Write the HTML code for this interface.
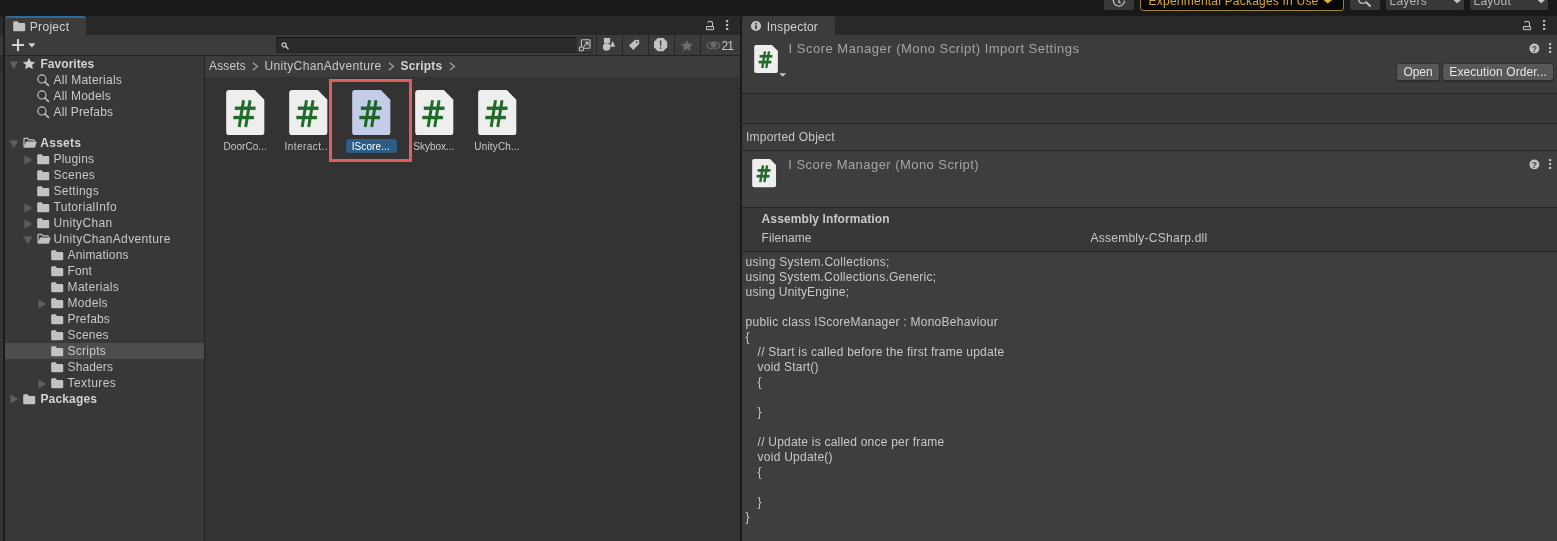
<!DOCTYPE html>
<html lang="en">
<head>
<meta charset="utf-8">
<title>Unity - Project / Inspector</title>
<style>
html,body{margin:0;padding:0;background:#383838;}
body{width:1557px;height:541px;position:relative;overflow:hidden;font-family:"Liberation Sans", sans-serif;}
#app{position:absolute;left:0;top:0;width:1557px;height:541px;will-change:transform;}
.t{position:absolute;white-space:pre;}
svg{display:block;overflow:visible;}
</style>
</head>
<body>
<div id="app">
<div style="position:absolute;left:0px;top:0px;width:1557px;height:16px;background:#191919;"></div>
<div style="position:absolute;left:0px;top:16px;width:1557px;height:19px;background:#282828;"></div>
<div style="position:absolute;left:0px;top:16px;width:3px;height:19px;background:#2a2a2a;"></div>
<div style="position:absolute;left:0px;top:35px;width:3px;height:18px;background:#393939;"></div>
<div style="position:absolute;left:0px;top:53px;width:3px;height:1px;background:#444444;"></div>
<div style="position:absolute;left:0px;top:54px;width:3px;height:16px;background:#2e2e2e;"></div>
<div style="position:absolute;left:0px;top:70px;width:3px;height:471px;background:#353535;"></div>
<div style="position:absolute;left:3px;top:16px;width:2px;height:525px;background:#1b1b1b;"></div>
<div style="position:absolute;left:5px;top:35px;width:735px;height:20px;background:#3c3c3c;"></div>
<div style="position:absolute;left:5px;top:55px;width:735px;height:1px;background:#232323;"></div>
<div style="position:absolute;left:5px;top:56px;width:199px;height:485px;background:#383838;"></div>
<div style="position:absolute;left:204px;top:56px;width:1px;height:485px;background:#232323;"></div>
<div style="position:absolute;left:205px;top:56px;width:535px;height:21px;background:#3c3c3c;"></div>
<div style="position:absolute;left:205px;top:77px;width:535px;height:464px;background:#333333;"></div>
<div style="position:absolute;left:740px;top:16px;width:2px;height:525px;background:#1b1b1b;"></div>
<div style="position:absolute;left:742px;top:35px;width:815px;height:58px;background:#3c3c3c;"></div>
<div style="position:absolute;left:742px;top:93px;width:815px;height:1px;background:#232323;"></div>
<div style="position:absolute;left:742px;top:94px;width:815px;height:29px;background:#383838;"></div>
<div style="position:absolute;left:742px;top:123px;width:815px;height:1px;background:#232323;"></div>
<div style="position:absolute;left:742px;top:124px;width:815px;height:26px;background:#3c3c3c;"></div>
<div style="position:absolute;left:742px;top:150px;width:815px;height:1px;background:#232323;"></div>
<div style="position:absolute;left:742px;top:151px;width:815px;height:56px;background:#3e3e3e;"></div>
<div style="position:absolute;left:742px;top:207px;width:815px;height:1px;background:#232323;"></div>
<div style="position:absolute;left:742px;top:208px;width:815px;height:43px;background:#383838;"></div>
<div style="position:absolute;left:742px;top:251px;width:815px;height:1px;background:#232323;"></div>
<div style="position:absolute;left:742px;top:252px;width:815px;height:289px;background:#3e3e3e;"></div>
<div style="position:absolute;left:1104px;top:0px;width:30px;height:10px;background:#383838;border-radius:0 0 2px 2px;"></div>
<svg style="position:absolute;left:1112px;top:0px;" width="14" height="8" viewBox="0 0 14 8"><path d="M1.3 0 A5.6 5.6 0 0 0 12.5 0.8" fill="none" stroke="#c4c4c4" stroke-width="1.25"/><path d="M6.9 0 V2.2 L8.6 2.9" fill="none" stroke="#c4c4c4" stroke-width="1.3"/></svg>
<div style="position:absolute;left:1140px;top:-6px;width:202px;height:15px;background:#060606;border:1px solid #9a822c;border-radius:3px;"></div>
<span class="t" style="left:1148.60px;top:-6.86px;font-size:12px;line-height:16px;color:#d9ab2c;letter-spacing:0.207px;">Experimental Packages In Use</span>
<svg style="position:absolute;left:1323px;top:0px;" width="10" height="4" viewBox="0 0 10 4"><path d="M0.5 0 H9 L4.8 3.6 Z" fill="#e0b12f"/></svg>
<div style="position:absolute;left:1350px;top:0px;width:30px;height:10px;background:#383838;border-radius:0 0 2px 2px;"></div>
<svg style="position:absolute;left:1358px;top:0px;" width="14" height="8" viewBox="0 0 14 8"><path d="M0.5 0 A4.6 4.6 0 0 0 8.6 1.6" fill="none" stroke="#c4c4c4" stroke-width="1.3"/><path d="M8.2 2.2 L12 6" stroke="#c4c4c4" stroke-width="1.8" stroke-linecap="round"/></svg>
<div style="position:absolute;left:1386px;top:0px;width:78px;height:10px;background:#383838;border-radius:0 0 2px 2px;"></div>
<span class="t" style="left:1389.50px;top:-6.96px;font-size:12px;line-height:16px;color:#b4b4b4;letter-spacing:0.250px;">Layers</span>
<svg style="position:absolute;left:1453px;top:0px;" width="9" height="4" viewBox="0 0 9 4"><path d="M0.5 0 H8 L4.2 3.2 Z" fill="#c4c4c4"/></svg>
<div style="position:absolute;left:1470px;top:0px;width:78px;height:10px;background:#383838;border-radius:0 0 2px 2px;"></div>
<span class="t" style="left:1473.50px;top:-6.96px;font-size:12px;line-height:16px;color:#b4b4b4;letter-spacing:0.250px;">Layout</span>
<svg style="position:absolute;left:1537px;top:0px;" width="9" height="4" viewBox="0 0 9 4"><path d="M0.5 0 H8 L4.2 3.2 Z" fill="#c4c4c4"/></svg>
<div style="position:absolute;left:5px;top:16px;width:81px;height:19px;background:#3c3c3c;border-radius:3px 3px 0 0;border-top:2px solid #306a98;box-sizing:border-box;"></div>
<svg style="position:absolute;left:12.6px;top:20.8px;" width="13" height="11" viewBox="0 0 13 11"><path d="M0.2 1.3 Q0.2 0.3 1.2 0.3 H4.6 L6 1.9 H11.2 Q12.2 1.9 12.2 2.9 V9.2 Q12.2 10.2 11.2 10.2 H1.2 Q0.2 10.2 0.2 9.2 Z" fill="#c2c2c2"/></svg>
<span class="t" style="left:29.80px;top:18.74px;font-size:12px;line-height:16px;color:#d2d2d2;letter-spacing:0.306px;">Project</span>
<svg style="position:absolute;left:705px;top:19.5px;" width="10" height="11" viewBox="0 0 10 11"><rect x="1.4" y="6.4" width="7.2" height="3.4" rx="0.7" fill="none" stroke="#c2c2c2" stroke-width="1.05"/><path d="M2.7 8.1 H7.3" stroke="#c2c2c2" stroke-width="0.8" opacity="0.4"/><path d="M2.8 2.9 Q2.9 1.2 5.1 1.2 Q7.5 1.2 7.5 3.4 V6" fill="none" stroke="#c2c2c2" stroke-width="1.05"/></svg>
<svg style="position:absolute;left:725.8px;top:20.2px;" width="3" height="11" viewBox="0 0 3 11"><rect x="0" y="0" width="2.2" height="2.2" rx="0.4" fill="#c2c2c2"/><rect x="0" y="3.9" width="2.2" height="2.2" rx="0.4" fill="#c2c2c2"/><rect x="0" y="7.8" width="2.2" height="2.2" rx="0.4" fill="#c2c2c2"/></svg>
<svg style="position:absolute;left:11px;top:38px;" width="14" height="14" viewBox="0 0 14 14"><path d="M7 0.9 V13.1 M0.9 7 H13.1" stroke="#d2d2d2" stroke-width="2.1"/></svg>
<svg style="position:absolute;left:28.2px;top:42.8px;" width="8" height="5" viewBox="0 0 8 5"><path d="M0.2 0.2 H7.6 L3.9 4.5 Z" fill="#d2d2d2"/></svg>
<div style="position:absolute;left:276px;top:37px;width:317px;height:16px;background:#2a2a2a;border-radius:3px;box-shadow:inset 0 1px 0 #111,inset 0 0 0 0.5px #1d1d1d;"></div>
<svg style="position:absolute;left:280.5px;top:42px;" width="9" height="9" viewBox="0 0 9 9"><circle cx="3.1" cy="2.9" r="2.05" fill="none" stroke="#d2d2d2" stroke-width="1.15"/><path d="M4.8 4.6 L7 6.7" stroke="#d2d2d2" stroke-width="1.35" stroke-linecap="round"/></svg>
<div style="position:absolute;left:576px;top:37px;width:17px;height:16px;background:#3a3a3a;border-radius:0 3px 3px 0;box-shadow:inset 0 0 0 1px #2e2e2e;"></div>
<svg style="position:absolute;left:577.9px;top:39.2px;" width="13" height="13" viewBox="0 0 13 13"><rect x="3.4" y="0.7" width="8.6" height="8.6" rx="1" fill="none" stroke="#c2c2c2" stroke-width="1.1"/><rect x="1.5" y="8" width="3.8" height="3.8" rx="0.6" fill="#3a3a3a" stroke="#c2c2c2" stroke-width="1.1"/><path d="M5.8 7.4 L9.8 3.4 M6.8 3.2 H10 V6.4" fill="none" stroke="#c2c2c2" stroke-width="1.1"/></svg>
<div style="position:absolute;left:596px;top:35px;width:1px;height:20px;background:#262626;"></div>
<div style="position:absolute;left:622px;top:35px;width:1px;height:20px;background:#262626;"></div>
<div style="position:absolute;left:648px;top:35px;width:1px;height:20px;background:#262626;"></div>
<div style="position:absolute;left:674px;top:35px;width:1px;height:20px;background:#262626;"></div>
<div style="position:absolute;left:700px;top:35px;width:1px;height:20px;background:#262626;"></div>
<svg style="position:absolute;left:602px;top:37px;" width="14" height="15" viewBox="0 0 14 15"><rect x="1.9" y="1" width="6.2" height="5.2" fill="#c2c2c2"/><circle cx="4.6" cy="10.1" r="3.75" fill="#c2c2c2"/><path d="M10.6 4 L13.3 9.8 H7.9 Z" fill="#c2c2c2"/></svg>
<svg style="position:absolute;left:628px;top:39px;" width="12" height="12" viewBox="0 0 12 12"><path d="M0.9 6.4 L6.8 1.1 L11 0.7 L11.3 4.8 L5.3 11.1 Z" fill="#c2c2c2"/><circle cx="8.6" cy="3.2" r="0.85" fill="#3c3c3c"/></svg>
<svg style="position:absolute;left:654px;top:37.8px;" width="13.2" height="13.2" viewBox="0 0 14 14"><path d="M4.1 0 H9.9 L14 4.1 V9.9 L9.9 14 H4.1 L0 9.9 V4.1 Z" fill="#c2c2c2"/><path d="M6.15 2.6 H7.85 L7.55 8.7 H6.45 Z" fill="#3c3c3c"/><circle cx="7" cy="10.7" r="0.95" fill="#3c3c3c"/></svg>
<svg style="position:absolute;left:680.9px;top:39.6px;" width="11.8" height="11.8" viewBox="0 0 12 12"><polygon points="6.00,0.58 7.64,3.98 11.59,4.39 8.66,6.91 9.46,10.57 6.00,8.72 2.54,10.57 3.34,6.91 0.41,4.39 4.36,3.98" fill="#6e6e6e" stroke="#6e6e6e" stroke-width="0.6" stroke-linejoin="round"/></svg>
<svg style="position:absolute;left:705.5px;top:40.5px;" width="15" height="9" viewBox="0 0 15 9"><ellipse cx="7.4" cy="4.55" rx="6.5" ry="3.6" fill="none" stroke="#686868" stroke-width="1.1"/><circle cx="7.6" cy="3.7" r="2.9" fill="#686868"/></svg>
<span class="t" style="left:721.50px;top:37.64px;font-size:12px;line-height:16px;color:#c8c8c8;letter-spacing:-0.930px;">21</span>
<div style="position:absolute;left:5px;top:343px;width:199px;height:16px;background:#4d4d4d;"></div>
<svg style="position:absolute;left:8.7px;top:60.5px;" width="10" height="9" viewBox="0 0 10 9"><path d="M0.3 0.5 H9.3 L4.8 8.3 Z" fill="#5e5e5e"/></svg>
<svg style="position:absolute;left:23.1px;top:58.0px;" width="12" height="12" viewBox="0 0 12 12"><polygon points="6.00,0.58 7.64,3.98 11.59,4.39 8.66,6.91 9.46,10.57 6.00,8.72 2.54,10.57 3.34,6.91 0.41,4.39 4.36,3.98" fill="#d0d0d0" stroke="#d0d0d0" stroke-width="0.6" stroke-linejoin="round"/></svg>
<span class="t" style="left:40.50px;top:56.04px;font-size:12px;line-height:16px;color:#d2d2d2;letter-spacing:0.038px;font-weight:700;">Favorites</span>
<svg style="position:absolute;left:36.8px;top:73.7px;" width="13" height="13" viewBox="0 0 13 13"><circle cx="4.9" cy="4.95" r="4.05" fill="none" stroke="#c2c2c2" stroke-width="1.15"/><path d="M8 8 L11.4 11.3" stroke="#c2c2c2" stroke-width="1.7" stroke-linecap="round"/></svg>
<span class="t" style="left:53.50px;top:72.04px;font-size:12px;line-height:16px;color:#c8c8c8;letter-spacing:0.249px;">All Materials</span>
<svg style="position:absolute;left:36.8px;top:89.7px;" width="13" height="13" viewBox="0 0 13 13"><circle cx="4.9" cy="4.95" r="4.05" fill="none" stroke="#c2c2c2" stroke-width="1.15"/><path d="M8 8 L11.4 11.3" stroke="#c2c2c2" stroke-width="1.7" stroke-linecap="round"/></svg>
<span class="t" style="left:53.50px;top:88.04px;font-size:12px;line-height:16px;color:#c8c8c8;letter-spacing:0.204px;">All Models</span>
<svg style="position:absolute;left:36.8px;top:105.7px;" width="13" height="13" viewBox="0 0 13 13"><circle cx="4.9" cy="4.95" r="4.05" fill="none" stroke="#c2c2c2" stroke-width="1.15"/><path d="M8 8 L11.4 11.3" stroke="#c2c2c2" stroke-width="1.7" stroke-linecap="round"/></svg>
<span class="t" style="left:53.50px;top:104.04px;font-size:12px;line-height:16px;color:#c8c8c8;letter-spacing:0.143px;">All Prefabs</span>
<svg style="position:absolute;left:8.7px;top:139.6px;" width="10" height="9" viewBox="0 0 10 9"><path d="M0.3 0.5 H9.3 L4.8 8.3 Z" fill="#5e5e5e"/></svg>
<svg style="position:absolute;left:22.7px;top:137.1px;" width="15" height="11" viewBox="0 0 15 11"><path d="M1 9.8 V2.2 Q1 1.3 1.9 1.3 H4.6 L5.9 2.8 H10.5 Q11.4 2.8 11.4 3.7 V4.5" fill="none" stroke="#c2c2c2" stroke-width="1.2"/><path d="M3.2 4.7 H13.5 L11.7 10.5 H0.8 Z" fill="#c2c2c2" stroke="#c2c2c2" stroke-width="0.4" stroke-linejoin="round"/></svg>
<span class="t" style="left:40.30px;top:135.04px;font-size:12px;line-height:16px;color:#d2d2d2;letter-spacing:0.257px;font-weight:700;">Assets</span>
<svg style="position:absolute;left:23.7px;top:154.8px;" width="9" height="10" viewBox="0 0 9 10"><path d="M0.5 0.4 V9.4 L8.3 4.9 Z" fill="#5e5e5e"/></svg>
<svg style="position:absolute;left:36.8px;top:153.9px;" width="13" height="11" viewBox="0 0 13 11"><path d="M0.2 1.3 Q0.2 0.3 1.2 0.3 H4.6 L6 1.9 H11.2 Q12.2 1.9 12.2 2.9 V9.2 Q12.2 10.2 11.2 10.2 H1.2 Q0.2 10.2 0.2 9.2 Z" fill="#c2c2c2"/></svg>
<span class="t" style="left:53.50px;top:151.04px;font-size:12px;line-height:16px;color:#c8c8c8;letter-spacing:0.192px;">Plugins</span>
<svg style="position:absolute;left:36.8px;top:169.9px;" width="13" height="11" viewBox="0 0 13 11"><path d="M0.2 1.3 Q0.2 0.3 1.2 0.3 H4.6 L6 1.9 H11.2 Q12.2 1.9 12.2 2.9 V9.2 Q12.2 10.2 11.2 10.2 H1.2 Q0.2 10.2 0.2 9.2 Z" fill="#c2c2c2"/></svg>
<span class="t" style="left:53.50px;top:167.04px;font-size:12px;line-height:16px;color:#c8c8c8;letter-spacing:0.261px;">Scenes</span>
<svg style="position:absolute;left:36.8px;top:185.9px;" width="13" height="11" viewBox="0 0 13 11"><path d="M0.2 1.3 Q0.2 0.3 1.2 0.3 H4.6 L6 1.9 H11.2 Q12.2 1.9 12.2 2.9 V9.2 Q12.2 10.2 11.2 10.2 H1.2 Q0.2 10.2 0.2 9.2 Z" fill="#c2c2c2"/></svg>
<span class="t" style="left:53.50px;top:183.04px;font-size:12px;line-height:16px;color:#c8c8c8;letter-spacing:0.280px;">Settings</span>
<svg style="position:absolute;left:23.7px;top:202.8px;" width="9" height="10" viewBox="0 0 9 10"><path d="M0.5 0.4 V9.4 L8.3 4.9 Z" fill="#5e5e5e"/></svg>
<svg style="position:absolute;left:36.8px;top:201.9px;" width="13" height="11" viewBox="0 0 13 11"><path d="M0.2 1.3 Q0.2 0.3 1.2 0.3 H4.6 L6 1.9 H11.2 Q12.2 1.9 12.2 2.9 V9.2 Q12.2 10.2 11.2 10.2 H1.2 Q0.2 10.2 0.2 9.2 Z" fill="#c2c2c2"/></svg>
<span class="t" style="left:53.50px;top:199.04px;font-size:12px;line-height:16px;color:#c8c8c8;letter-spacing:0.317px;">TutorialInfo</span>
<svg style="position:absolute;left:23.7px;top:218.8px;" width="9" height="10" viewBox="0 0 9 10"><path d="M0.5 0.4 V9.4 L8.3 4.9 Z" fill="#5e5e5e"/></svg>
<svg style="position:absolute;left:36.8px;top:217.9px;" width="13" height="11" viewBox="0 0 13 11"><path d="M0.2 1.3 Q0.2 0.3 1.2 0.3 H4.6 L6 1.9 H11.2 Q12.2 1.9 12.2 2.9 V9.2 Q12.2 10.2 11.2 10.2 H1.2 Q0.2 10.2 0.2 9.2 Z" fill="#c2c2c2"/></svg>
<span class="t" style="left:53.50px;top:215.04px;font-size:12px;line-height:16px;color:#c8c8c8;letter-spacing:0.319px;">UnityChan</span>
<svg style="position:absolute;left:23px;top:235.5px;" width="10" height="9" viewBox="0 0 10 9"><path d="M0.3 0.5 H9.3 L4.8 8.3 Z" fill="#5e5e5e"/></svg>
<svg style="position:absolute;left:36.7px;top:233.4px;" width="15" height="11" viewBox="0 0 15 11"><path d="M1 9.8 V2.2 Q1 1.3 1.9 1.3 H4.6 L5.9 2.8 H10.5 Q11.4 2.8 11.4 3.7 V4.5" fill="none" stroke="#c2c2c2" stroke-width="1.2"/><path d="M3.2 4.7 H13.5 L11.7 10.5 H0.8 Z" fill="#c2c2c2" stroke="#c2c2c2" stroke-width="0.4" stroke-linejoin="round"/></svg>
<span class="t" style="left:53.50px;top:231.04px;font-size:12px;line-height:16px;color:#c8c8c8;letter-spacing:0.359px;">UnityChanAdventure</span>
<svg style="position:absolute;left:50.8px;top:249.9px;" width="13" height="11" viewBox="0 0 13 11"><path d="M0.2 1.3 Q0.2 0.3 1.2 0.3 H4.6 L6 1.9 H11.2 Q12.2 1.9 12.2 2.9 V9.2 Q12.2 10.2 11.2 10.2 H1.2 Q0.2 10.2 0.2 9.2 Z" fill="#c2c2c2"/></svg>
<span class="t" style="left:67.60px;top:247.04px;font-size:12px;line-height:16px;color:#c8c8c8;letter-spacing:0.172px;">Animations</span>
<svg style="position:absolute;left:50.8px;top:265.9px;" width="13" height="11" viewBox="0 0 13 11"><path d="M0.2 1.3 Q0.2 0.3 1.2 0.3 H4.6 L6 1.9 H11.2 Q12.2 1.9 12.2 2.9 V9.2 Q12.2 10.2 11.2 10.2 H1.2 Q0.2 10.2 0.2 9.2 Z" fill="#c2c2c2"/></svg>
<span class="t" style="left:67.60px;top:263.04px;font-size:12px;line-height:16px;color:#c8c8c8;letter-spacing:0.046px;">Font</span>
<svg style="position:absolute;left:50.8px;top:281.9px;" width="13" height="11" viewBox="0 0 13 11"><path d="M0.2 1.3 Q0.2 0.3 1.2 0.3 H4.6 L6 1.9 H11.2 Q12.2 1.9 12.2 2.9 V9.2 Q12.2 10.2 11.2 10.2 H1.2 Q0.2 10.2 0.2 9.2 Z" fill="#c2c2c2"/></svg>
<span class="t" style="left:67.60px;top:279.04px;font-size:12px;line-height:16px;color:#c8c8c8;letter-spacing:0.301px;">Materials</span>
<svg style="position:absolute;left:37.7px;top:298.8px;" width="9" height="10" viewBox="0 0 9 10"><path d="M0.5 0.4 V9.4 L8.3 4.9 Z" fill="#5e5e5e"/></svg>
<svg style="position:absolute;left:50.8px;top:297.9px;" width="13" height="11" viewBox="0 0 13 11"><path d="M0.2 1.3 Q0.2 0.3 1.2 0.3 H4.6 L6 1.9 H11.2 Q12.2 1.9 12.2 2.9 V9.2 Q12.2 10.2 11.2 10.2 H1.2 Q0.2 10.2 0.2 9.2 Z" fill="#c2c2c2"/></svg>
<span class="t" style="left:67.60px;top:295.04px;font-size:12px;line-height:16px;color:#c8c8c8;letter-spacing:0.269px;">Models</span>
<svg style="position:absolute;left:50.8px;top:313.9px;" width="13" height="11" viewBox="0 0 13 11"><path d="M0.2 1.3 Q0.2 0.3 1.2 0.3 H4.6 L6 1.9 H11.2 Q12.2 1.9 12.2 2.9 V9.2 Q12.2 10.2 11.2 10.2 H1.2 Q0.2 10.2 0.2 9.2 Z" fill="#c2c2c2"/></svg>
<span class="t" style="left:67.60px;top:311.04px;font-size:12px;line-height:16px;color:#c8c8c8;letter-spacing:0.134px;">Prefabs</span>
<svg style="position:absolute;left:50.8px;top:329.9px;" width="13" height="11" viewBox="0 0 13 11"><path d="M0.2 1.3 Q0.2 0.3 1.2 0.3 H4.6 L6 1.9 H11.2 Q12.2 1.9 12.2 2.9 V9.2 Q12.2 10.2 11.2 10.2 H1.2 Q0.2 10.2 0.2 9.2 Z" fill="#c2c2c2"/></svg>
<span class="t" style="left:67.60px;top:327.04px;font-size:12px;line-height:16px;color:#c8c8c8;letter-spacing:0.195px;">Scenes</span>
<svg style="position:absolute;left:50.8px;top:345.9px;" width="13" height="11" viewBox="0 0 13 11"><path d="M0.2 1.3 Q0.2 0.3 1.2 0.3 H4.6 L6 1.9 H11.2 Q12.2 1.9 12.2 2.9 V9.2 Q12.2 10.2 11.2 10.2 H1.2 Q0.2 10.2 0.2 9.2 Z" fill="#c2c2c2"/></svg>
<span class="t" style="left:67.60px;top:343.04px;font-size:12px;line-height:16px;color:#c8c8c8;letter-spacing:0.259px;">Scripts</span>
<svg style="position:absolute;left:50.8px;top:361.9px;" width="13" height="11" viewBox="0 0 13 11"><path d="M0.2 1.3 Q0.2 0.3 1.2 0.3 H4.6 L6 1.9 H11.2 Q12.2 1.9 12.2 2.9 V9.2 Q12.2 10.2 11.2 10.2 H1.2 Q0.2 10.2 0.2 9.2 Z" fill="#c2c2c2"/></svg>
<span class="t" style="left:67.60px;top:359.04px;font-size:12px;line-height:16px;color:#c8c8c8;letter-spacing:0.114px;">Shaders</span>
<svg style="position:absolute;left:37.7px;top:378.8px;" width="9" height="10" viewBox="0 0 9 10"><path d="M0.5 0.4 V9.4 L8.3 4.9 Z" fill="#5e5e5e"/></svg>
<svg style="position:absolute;left:50.8px;top:377.9px;" width="13" height="11" viewBox="0 0 13 11"><path d="M0.2 1.3 Q0.2 0.3 1.2 0.3 H4.6 L6 1.9 H11.2 Q12.2 1.9 12.2 2.9 V9.2 Q12.2 10.2 11.2 10.2 H1.2 Q0.2 10.2 0.2 9.2 Z" fill="#c2c2c2"/></svg>
<span class="t" style="left:67.60px;top:375.04px;font-size:12px;line-height:16px;color:#c8c8c8;letter-spacing:0.393px;">Textures</span>
<svg style="position:absolute;left:10px;top:394.2px;" width="9" height="10" viewBox="0 0 9 10"><path d="M0.5 0.4 V9.4 L8.3 4.9 Z" fill="#5e5e5e"/></svg>
<svg style="position:absolute;left:22.7px;top:393.7px;" width="13" height="11" viewBox="0 0 13 11"><path d="M0.2 1.3 Q0.2 0.3 1.2 0.3 H4.6 L6 1.9 H11.2 Q12.2 1.9 12.2 2.9 V9.2 Q12.2 10.2 11.2 10.2 H1.2 Q0.2 10.2 0.2 9.2 Z" fill="#c2c2c2"/></svg>
<span class="t" style="left:40.40px;top:391.04px;font-size:12px;line-height:16px;color:#d2d2d2;letter-spacing:0.164px;font-weight:700;">Packages</span>
<span class="t" style="left:209.00px;top:57.74px;font-size:12px;line-height:16px;color:#c8c8c8;letter-spacing:0.164px;">Assets</span>
<span class="t" style="left:264.50px;top:57.74px;font-size:12px;line-height:16px;color:#c8c8c8;letter-spacing:0.354px;">UnityChanAdventure</span>
<span class="t" style="left:400.60px;top:57.74px;font-size:12px;line-height:16px;color:#d2d2d2;letter-spacing:0.130px;font-weight:700;">Scripts</span>
<svg style="position:absolute;left:251.8px;top:62.1px;" width="7" height="9" viewBox="0 0 7 9"><path d="M0.9 0.8 L5.5 4.45 L0.9 8.1" fill="none" stroke="#a0a0a0" stroke-width="1.25"/></svg>
<svg style="position:absolute;left:387.8px;top:62.1px;" width="7" height="9" viewBox="0 0 7 9"><path d="M0.9 0.8 L5.5 4.45 L0.9 8.1" fill="none" stroke="#a0a0a0" stroke-width="1.25"/></svg>
<svg style="position:absolute;left:448.9px;top:62.1px;" width="7" height="9" viewBox="0 0 7 9"><path d="M0.9 0.8 L5.5 4.45 L0.9 8.1" fill="none" stroke="#a0a0a0" stroke-width="1.25"/></svg>
<svg style="position:absolute;left:226.2px;top:89.9px;" width="38.5" height="45.1" viewBox="0 0 38.5 45.5"><path d="M3.2 0 H28.9 L38.5 9.8 V42.3 Q38.5 45.5 35.3 45.5 H3.2 Q0 45.5 0 42.3 V3.2 Q0 0 3.2 0 Z" fill="#eeeeee"/><g stroke="#1f6b27" fill="none"><path d="M13.1 37.4 L17.5 10.3" stroke-width="3"/><path d="M19.7 37.4 L24.1 10.3" stroke-width="3"/><path d="M8.7 18.4 H29.6" stroke-width="3.4"/><path d="M7.2 27.8 H28" stroke-width="3.4"/></g></svg>
<span class="t" style="left:223.60px;top:139.59px;font-size:10px;line-height:14px;color:#c8c8c8;letter-spacing:0.045px;">DoorCo...</span>
<svg style="position:absolute;left:289.25px;top:89.9px;" width="38.5" height="45.1" viewBox="0 0 38.5 45.5"><path d="M3.2 0 H28.9 L38.5 9.8 V42.3 Q38.5 45.5 35.3 45.5 H3.2 Q0 45.5 0 42.3 V3.2 Q0 0 3.2 0 Z" fill="#eeeeee"/><g stroke="#1f6b27" fill="none"><path d="M13.1 37.4 L17.5 10.3" stroke-width="3"/><path d="M19.7 37.4 L24.1 10.3" stroke-width="3"/><path d="M8.7 18.4 H29.6" stroke-width="3.4"/><path d="M7.2 27.8 H28" stroke-width="3.4"/></g></svg>
<span class="t" style="left:284.50px;top:139.59px;font-size:10px;line-height:14px;color:#c8c8c8;letter-spacing:0.456px;">Interact...</span>
<svg style="position:absolute;left:352.3px;top:89.9px;" width="38.5" height="45.1" viewBox="0 0 38.5 45.5"><path d="M3.2 0 H28.9 L38.5 9.8 V42.3 Q38.5 45.5 35.3 45.5 H3.2 Q0 45.5 0 42.3 V3.2 Q0 0 3.2 0 Z" fill="#c4cde8"/><g stroke="#1c6424" fill="none"><path d="M13.1 37.4 L17.5 10.3" stroke-width="3"/><path d="M19.7 37.4 L24.1 10.3" stroke-width="3"/><path d="M8.7 18.4 H29.6" stroke-width="3.4"/><path d="M7.2 27.8 H28" stroke-width="3.4"/></g></svg>
<div style="position:absolute;left:345.8px;top:139.1px;width:51.1px;height:14.1px;background:#2c5d87;border-radius:3px;"></div>
<span class="t" style="left:351.70px;top:139.59px;font-size:10px;line-height:14px;color:#ffffff;letter-spacing:0.106px;">IScore...</span>
<svg style="position:absolute;left:415.35px;top:89.9px;" width="38.5" height="45.1" viewBox="0 0 38.5 45.5"><path d="M3.2 0 H28.9 L38.5 9.8 V42.3 Q38.5 45.5 35.3 45.5 H3.2 Q0 45.5 0 42.3 V3.2 Q0 0 3.2 0 Z" fill="#eeeeee"/><g stroke="#1f6b27" fill="none"><path d="M13.1 37.4 L17.5 10.3" stroke-width="3"/><path d="M19.7 37.4 L24.1 10.3" stroke-width="3"/><path d="M8.7 18.4 H29.6" stroke-width="3.4"/><path d="M7.2 27.8 H28" stroke-width="3.4"/></g></svg>
<span class="t" style="left:413.30px;top:139.59px;font-size:10px;line-height:14px;color:#c8c8c8;letter-spacing:-0.005px;">Skybox...</span>
<svg style="position:absolute;left:478.4px;top:89.9px;" width="38.5" height="45.1" viewBox="0 0 38.5 45.5"><path d="M3.2 0 H28.9 L38.5 9.8 V42.3 Q38.5 45.5 35.3 45.5 H3.2 Q0 45.5 0 42.3 V3.2 Q0 0 3.2 0 Z" fill="#eeeeee"/><g stroke="#1f6b27" fill="none"><path d="M13.1 37.4 L17.5 10.3" stroke-width="3"/><path d="M19.7 37.4 L24.1 10.3" stroke-width="3"/><path d="M8.7 18.4 H29.6" stroke-width="3.4"/><path d="M7.2 27.8 H28" stroke-width="3.4"/></g></svg>
<span class="t" style="left:474.30px;top:139.59px;font-size:10px;line-height:14px;color:#c8c8c8;letter-spacing:0.159px;">UnityCh...</span>
<div style="position:absolute;left:329px;top:79px;width:77px;height:77px;border:3px solid #e35d5d;"></div>
<div style="position:absolute;left:742px;top:16px;width:93px;height:19px;background:#3c3c3c;border-radius:3px 3px 0 0;"></div>
<svg style="position:absolute;left:751px;top:21px;" width="10" height="10" viewBox="0 0 10 10"><circle cx="5" cy="5" r="5.1" fill="#c2c2c2"/><rect x="4.2" y="4.2" width="1.7" height="3.8" fill="#3c3c3c"/><rect x="4.2" y="1.9" width="1.7" height="1.6" fill="#3c3c3c"/></svg>
<span class="t" style="left:766.70px;top:18.84px;font-size:12px;line-height:16px;color:#d2d2d2;letter-spacing:0.227px;">Inspector</span>
<svg style="position:absolute;left:1522px;top:19.5px;" width="10" height="11" viewBox="0 0 10 11"><rect x="1.4" y="6.4" width="7.2" height="3.4" rx="0.7" fill="none" stroke="#c2c2c2" stroke-width="1.05"/><path d="M2.7 8.1 H7.3" stroke="#c2c2c2" stroke-width="0.8" opacity="0.4"/><path d="M2.8 2.9 Q2.9 1.2 5.1 1.2 Q7.5 1.2 7.5 3.4 V6" fill="none" stroke="#c2c2c2" stroke-width="1.05"/></svg>
<svg style="position:absolute;left:1542.9px;top:20.2px;" width="3" height="11" viewBox="0 0 3 11"><rect x="0" y="0" width="2.2" height="2.2" rx="0.4" fill="#c2c2c2"/><rect x="0" y="3.9" width="2.2" height="2.2" rx="0.4" fill="#c2c2c2"/><rect x="0" y="7.8" width="2.2" height="2.2" rx="0.4" fill="#c2c2c2"/></svg>
<svg style="position:absolute;left:753.9px;top:44.9px;" width="24.1" height="28" viewBox="0 0 38.5 45.5"><path d="M3.2 0 H28.9 L38.5 9.8 V42.3 Q38.5 45.5 35.3 45.5 H3.2 Q0 45.5 0 42.3 V3.2 Q0 0 3.2 0 Z" fill="#eeeeee"/><g stroke="#1f6b27" fill="none"><path d="M13.1 37.4 L17.5 10.3" stroke-width="3.9"/><path d="M19.7 37.4 L24.1 10.3" stroke-width="3.9"/><path d="M8.7 18.4 H29.6" stroke-width="4.3"/><path d="M7.2 27.8 H28" stroke-width="4.3"/></g></svg>
<svg style="position:absolute;left:778.6px;top:73.4px;" width="8" height="4" viewBox="0 0 8 4"><path d="M0.2 0.2 H7.2 L3.7 3.8 Z" fill="#c4c4c4"/></svg>
<span class="t" style="left:788.60px;top:39.50px;font-size:13px;line-height:18px;color:#a4a4a4;letter-spacing:0.492px;">I Score Manager (Mono Script) Import Settings</span>
<svg style="position:absolute;left:1528.6px;top:42.7px;" width="11" height="11" viewBox="0 0 11 11"><circle cx="5.4" cy="5.4" r="4.95" fill="#c2c2c2"/><text x="5.4" y="8.6" font-size="8.6" font-weight="700" text-anchor="middle" font-family='"Liberation Sans", sans-serif' fill="#3c3c3c">?</text></svg>
<svg style="position:absolute;left:1548.7px;top:43.2px;" width="3" height="11" viewBox="0 0 3 11"><rect x="0" y="0" width="2.2" height="2.2" rx="0.4" fill="#c2c2c2"/><rect x="0" y="3.9" width="2.2" height="2.2" rx="0.4" fill="#c2c2c2"/><rect x="0" y="7.8" width="2.2" height="2.2" rx="0.4" fill="#c2c2c2"/></svg>
<div style="position:absolute;left:1397px;top:64px;width:42px;height:16px;background:#585858;border-radius:2.5px;box-shadow:0 0 0 1px #303030,0 1px 0 1px #2a2a2a;"></div>
<span class="t" style="left:1403.40px;top:63.84px;font-size:12px;line-height:16px;color:#e4e4e4;letter-spacing:-0.065px;">Open</span>
<div style="position:absolute;left:1443px;top:64px;width:110px;height:16px;background:#585858;border-radius:2.5px;box-shadow:0 0 0 1px #303030,0 1px 0 1px #2a2a2a;"></div>
<span class="t" style="left:1449.30px;top:63.84px;font-size:12px;line-height:16px;color:#e4e4e4;letter-spacing:0.092px;">Execution Order...</span>
<span class="t" style="left:746.00px;top:129.14px;font-size:12px;line-height:16px;color:#c8c8c8;letter-spacing:0.228px;">Imported Object</span>
<svg style="position:absolute;left:751.9px;top:158.9px;" width="24.2" height="28.2" viewBox="0 0 38.5 45.5"><path d="M3.2 0 H28.9 L38.5 9.8 V42.3 Q38.5 45.5 35.3 45.5 H3.2 Q0 45.5 0 42.3 V3.2 Q0 0 3.2 0 Z" fill="#eeeeee"/><g stroke="#1f6b27" fill="none"><path d="M13.1 37.4 L17.5 10.3" stroke-width="3.9"/><path d="M19.7 37.4 L24.1 10.3" stroke-width="3.9"/><path d="M8.7 18.4 H29.6" stroke-width="4.3"/><path d="M7.2 27.8 H28" stroke-width="4.3"/></g></svg>
<span class="t" style="left:788.30px;top:155.70px;font-size:13px;line-height:18px;color:#a4a4a4;letter-spacing:0.447px;">I Score Manager (Mono Script)</span>
<svg style="position:absolute;left:1528.6px;top:158.7px;" width="11" height="11" viewBox="0 0 11 11"><circle cx="5.4" cy="5.4" r="4.95" fill="#c2c2c2"/><text x="5.4" y="8.6" font-size="8.6" font-weight="700" text-anchor="middle" font-family='"Liberation Sans", sans-serif' fill="#3c3c3c">?</text></svg>
<svg style="position:absolute;left:1548.7px;top:159.2px;" width="3" height="11" viewBox="0 0 3 11"><rect x="0" y="0" width="2.2" height="2.2" rx="0.4" fill="#c2c2c2"/><rect x="0" y="3.9" width="2.2" height="2.2" rx="0.4" fill="#c2c2c2"/><rect x="0" y="7.8" width="2.2" height="2.2" rx="0.4" fill="#c2c2c2"/></svg>
<span class="t" style="left:761.60px;top:210.94px;font-size:12px;line-height:16px;color:#c8c8c8;letter-spacing:0.103px;font-weight:700;">Assembly Information</span>
<span class="t" style="left:761.60px;top:229.94px;font-size:12px;line-height:16px;color:#c8c8c8;letter-spacing:0.068px;">Filename</span>
<span class="t" style="left:1090.40px;top:229.94px;font-size:12px;line-height:16px;color:#c8c8c8;letter-spacing:0.266px;">Assembly-CSharp.dll</span>
<span class="t" style="left:745.60px;top:254.24px;font-size:12px;line-height:16px;color:#c8c8c8;letter-spacing:0.268px;">using System.Collections;</span>
<span class="t" style="left:745.60px;top:269.24px;font-size:12px;line-height:16px;color:#c8c8c8;letter-spacing:0.241px;">using System.Collections.Generic;</span>
<span class="t" style="left:745.60px;top:284.24px;font-size:12px;line-height:16px;color:#c8c8c8;letter-spacing:0.197px;">using UnityEngine;</span>
<span class="t" style="left:745.60px;top:314.24px;font-size:12px;line-height:16px;color:#c8c8c8;letter-spacing:0.258px;">public class IScoreManager : MonoBehaviour</span>
<span class="t" style="left:745.60px;top:329.24px;font-size:12px;line-height:16px;color:#c8c8c8;letter-spacing:0.270px;">{</span>
<span class="t" style="left:757.60px;top:344.24px;font-size:12px;line-height:16px;color:#c8c8c8;letter-spacing:0.222px;">// Start is called before the first frame update</span>
<span class="t" style="left:757.60px;top:359.24px;font-size:12px;line-height:16px;color:#c8c8c8;letter-spacing:0.209px;">void Start()</span>
<span class="t" style="left:757.60px;top:374.24px;font-size:12px;line-height:16px;color:#c8c8c8;letter-spacing:0.270px;">{</span>
<span class="t" style="left:757.60px;top:404.24px;font-size:12px;line-height:16px;color:#c8c8c8;letter-spacing:0.270px;">}</span>
<span class="t" style="left:757.60px;top:434.24px;font-size:12px;line-height:16px;color:#c8c8c8;letter-spacing:0.219px;">// Update is called once per frame</span>
<span class="t" style="left:757.60px;top:449.24px;font-size:12px;line-height:16px;color:#c8c8c8;letter-spacing:0.243px;">void Update()</span>
<span class="t" style="left:757.60px;top:464.24px;font-size:12px;line-height:16px;color:#c8c8c8;letter-spacing:0.270px;">{</span>
<span class="t" style="left:757.60px;top:494.24px;font-size:12px;line-height:16px;color:#c8c8c8;letter-spacing:0.270px;">}</span>
<span class="t" style="left:745.60px;top:509.24px;font-size:12px;line-height:16px;color:#c8c8c8;letter-spacing:0.270px;">}</span>
</div>
</body>
</html>
